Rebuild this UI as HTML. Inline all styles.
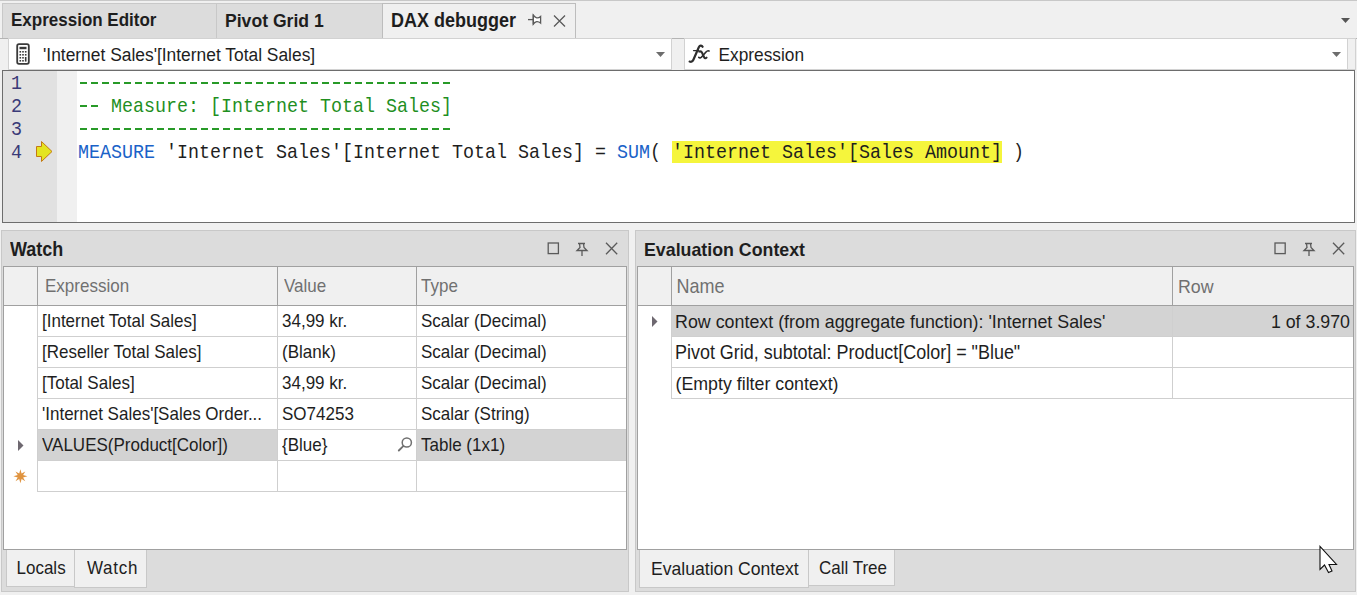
<!DOCTYPE html>
<html><head><meta charset="utf-8">
<style>
*{box-sizing:border-box;margin:0;padding:0}
html,body{width:1357px;height:595px;overflow:hidden;background:#f0f0f0;font-family:"Liberation Sans",sans-serif;font-size:17px;color:#1e1e1e}
.a{position:absolute}
.t{position:absolute;white-space:nowrap;line-height:20px;transform:scaleY(1.08);transform-origin:0 16px}
.b{font-weight:bold}
.m{position:absolute;font-family:"Liberation Mono",monospace;font-size:18.333px;line-height:23px;white-space:pre;left:78px;color:#1e1e1e;transform:scaleY(1.07);transform-origin:0 16px}
.dash{position:absolute;left:78px;width:374px;height:2px;background:repeating-linear-gradient(90deg,transparent 0 2px,#289a28 2px 9px,transparent 9px 11px)}
.g{color:#1f8f1f}
.k{color:#1a62c8}
.hl{background:#f5f53c}
.hd{color:#707070}
svg{position:absolute;overflow:visible}
</style></head><body>
<!-- top strip -->
<div class="a" style="left:0;top:0;width:1357px;height:1px;background:#c8c8c8"></div>
<div class="a" style="left:2px;top:3px;width:215px;height:36px;background:#dcdcdc;border:1px solid #c8c8c8;border-bottom:none"></div>
<div class="a" style="left:216px;top:3px;width:167px;height:36px;background:#dcdcdc;border:1px solid #c8c8c8;border-bottom:none"></div>
<div class="a" style="left:382px;top:3px;width:194px;height:36px;background:#f0f0f0;border:1px solid #bdbdbd;border-bottom:none"></div>
<div class="a" style="left:0;top:38px;width:1357px;height:1px;background:#b4b4b4"></div>
<div class="t b" style="left:11px;top:11px">Expression Editor</div>
<div class="t b" style="left:225px;top:11px;font-size:17.6px">Pivot Grid 1</div>
<div class="t b" style="left:391px;top:11px;font-size:18px">DAX debugger</div>
<!-- tab pin (horizontal) -->
<svg style="left:0;top:0" width="1" height="1"><g fill="none" stroke="#5a5a5a" stroke-width="1.3">
<path d="M533.3 15.2Q536.5 19.8 540.6 16.4V23.1Q536.5 19.6 533.3 24Z" fill="#fff"/><path d="M528 19.6H533.3"/><path d="M533.3 14.5V24.5"/>
<path d="M554 15.5L565 26.5M565 15.5L554 26.5"/></g></svg>
<!-- tab strip dropdown arrow -->
<svg style="left:1341px;top:18px" width="9" height="5"><path d="M0 0H9L4.5 5Z" fill="#555"/></svg>

<!-- combos -->
<div class="a" style="left:8px;top:38px;width:664px;height:32px;background:#fff;border:1px solid #d2d2d2"></div>
<div class="a" style="left:684px;top:38px;width:664px;height:32px;background:#fff;border:1px solid #d2d2d2"></div>
<div class="a" style="left:1347px;top:38px;width:9px;height:32px;background:#f0f0f0;border:1px solid #d2d2d2"></div>
<div class="t" style="left:43px;top:45px;font-size:17.4px">'Internet Sales'[Internet Total Sales]</div>
<div class="t" style="left:718.5px;top:45px;font-size:17.3px">Expression</div>
<svg style="left:656px;top:52px" width="9" height="5"><path d="M0 0H9L4.5 5Z" fill="#6d6d6d"/></svg>
<svg style="left:1332px;top:52px" width="9" height="5"><path d="M0 0H9L4.5 5Z" fill="#6d6d6d"/></svg>
<!-- calculator -->
<svg style="left:0;top:0" width="1" height="1">
<rect x="17.2" y="44.2" width="11.6" height="19.6" rx="1.8" fill="#fff" stroke="#3a3a3a" stroke-width="1.8"/>
<rect x="19.5" y="46.8" width="7" height="2.4" fill="#3a3a3a"/>
<g fill="#3a3a3a">
<rect x="19.5" y="51" width="1.6" height="1.6"/><rect x="22.2" y="51" width="1.6" height="1.6"/><rect x="24.9" y="51" width="1.6" height="1.6"/>
<rect x="19.5" y="54" width="1.6" height="1.6"/><rect x="22.2" y="54" width="1.6" height="1.6"/><rect x="24.9" y="54" width="1.6" height="1.6"/>
<rect x="19.5" y="57" width="1.6" height="1.6"/><rect x="22.2" y="57" width="1.6" height="1.6"/><rect x="24.9" y="57" width="1.6" height="4.6"/>
<rect x="19.5" y="60" width="1.6" height="1.6"/><rect x="22.2" y="60" width="1.6" height="1.6"/>
</g></svg>
<!-- fx -->
<svg style="left:0;top:0" width="1" height="1"><g fill="none" stroke="#2e2e2e" stroke-linecap="round">
<path d="M702.6 46.8C701.8 45.2 699.8 45.3 698.8 47.2L693.4 59.8C692.6 61.6 691 62.2 689.6 61.6" stroke-width="2.2"/>
<path d="M693.6 50.6H698.8" stroke-width="1.4"/>
<path d="M699.2 51.6C700.6 51 701.6 51.6 702.2 53L704 57C704.6 58.3 705.6 58.6 706.6 57.6" stroke-width="2"/>
<path d="M709 51C708 50.4 707 50.9 706 52L701.6 57C700.6 58.1 699.6 58.2 698.8 57.4" stroke-width="1.7"/>
</g></svg>

<!-- editor -->
<div class="a" style="left:2px;top:70px;width:1353px;height:153px;background:#fff;border:1px solid #6d6d6d"></div>
<div class="a" style="left:3px;top:71px;width:54px;height:151px;background:#e1e1e1"></div>
<div class="a" style="left:57px;top:71px;width:20px;height:151px;background:#f0f0f0"></div>
<div class="m" style="left:11px;top:73px;color:#3a3a78">1</div>
<div class="m" style="left:11px;top:96px;color:#3a3a78">2</div>
<div class="m" style="left:11px;top:119px;color:#3a3a78">3</div>
<div class="m" style="left:11px;top:142px;color:#3a3a78">4</div>
<svg style="left:0;top:0" width="1" height="1"><path d="M36.5 146.5H41.5V141.5L52 151.5L41.5 161.5V156.5H36.5Z" fill="#e4e420" stroke="#c47a12" stroke-width="1"/></svg>
<div class="dash" style="top:82px"></div>
<div class="dash" style="top:105px;width:22px"></div><div class="m g" style="top:96px">   Measure: [Internet Total Sales]</div>
<div class="dash" style="top:128px"></div>
<div class="a hl" style="left:672px;top:141px;width:330px;height:22px"></div>
<div class="m" style="top:142px"><span class="k">MEASURE</span> 'Internet Sales'[Internet Total Sales] = <span class="k">SUM</span>( 'Internet Sales'[Sales Amount] )</div>

<!-- bottom panels frames -->
<div class="a" style="left:1px;top:230px;width:628px;height:362px;background:#dcdcdc;border:1px solid #c8c8c8"></div>
<div class="a" style="left:635px;top:230px;width:721px;height:362px;background:#dcdcdc;border:1px solid #c8c8c8"></div>
<div class="t b" style="left:10px;top:240px;font-size:18px">Watch</div>
<div class="t b" style="left:644px;top:240px;font-size:17.8px">Evaluation Context</div>

<div class="a" style="left:3px;top:266px;width:624px;height:284px;background:#fff;border:1px solid #a0a0a0"></div>
<div class="a" style="left:637px;top:266px;width:717px;height:284px;background:#fff;border:1px solid #a0a0a0"></div>

<!-- watch grid -->
<div class="a" style="left:4px;top:267px;width:622px;height:38px;background:#f0f0f0"></div>
<div class="a" style="left:3px;top:305px;width:624px;height:1px;background:#a0a0a0"></div>
<div class="a" style="left:37px;top:267px;width:1px;height:38px;background:#a0a0a0"></div>
<div class="a" style="left:277px;top:267px;width:1px;height:38px;background:#a0a0a0"></div>
<div class="a" style="left:416px;top:267px;width:1px;height:38px;background:#a0a0a0"></div>
<div class="a" style="left:38px;top:430px;width:239px;height:30px;background:#d3d3d3"></div>
<div class="a" style="left:417px;top:430px;width:209px;height:30px;background:#d3d3d3"></div>
<div class="a" style="left:37px;top:336px;width:589px;height:1px;background:#cfcfcf"></div>
<div class="a" style="left:37px;top:367px;width:589px;height:1px;background:#cfcfcf"></div>
<div class="a" style="left:37px;top:398px;width:589px;height:1px;background:#cfcfcf"></div>
<div class="a" style="left:37px;top:429px;width:589px;height:1px;background:#cfcfcf"></div>
<div class="a" style="left:37px;top:460px;width:589px;height:1px;background:#cfcfcf"></div>
<div class="a" style="left:37px;top:491px;width:589px;height:1px;background:#cfcfcf"></div>
<div class="a" style="left:37px;top:306px;width:1px;height:186px;background:#cfcfcf"></div>
<div class="a" style="left:277px;top:306px;width:1px;height:186px;background:#cfcfcf"></div>
<div class="a" style="left:416px;top:306px;width:1px;height:186px;background:#cfcfcf"></div>
<div class="t hd" style="left:45px;top:277px">Expression</div>
<div class="t hd" style="left:284px;top:277px">Value</div>
<div class="t hd" style="left:421px;top:277px">Type</div>
<div class="t" style="left:42px;top:312px">[Internet Total Sales]</div>
<div class="t" style="left:282px;top:312px">34,99 kr.</div>
<div class="t" style="left:421px;top:312px">Scalar (Decimal)</div>
<div class="t" style="left:42px;top:343px">[Reseller Total Sales]</div>
<div class="t" style="left:282px;top:343px">(Blank)</div>
<div class="t" style="left:421px;top:343px">Scalar (Decimal)</div>
<div class="t" style="left:42px;top:374px">[Total Sales]</div>
<div class="t" style="left:282px;top:374px">34,99 kr.</div>
<div class="t" style="left:421px;top:374px">Scalar (Decimal)</div>
<div class="t" style="left:42px;top:405px">'Internet Sales'[Sales Order...</div>
<div class="t" style="left:282px;top:405px">SO74253</div>
<div class="t" style="left:421px;top:405px">Scalar (String)</div>
<div class="t" style="left:42px;top:436px">VALUES(Product[Color])</div>
<div class="t" style="left:282px;top:436px">{Blue}</div>
<div class="t" style="left:421px;top:436px">Table (1x1)</div>
<!-- eval grid -->
<div class="a" style="left:638px;top:267px;width:715px;height:38px;background:#f0f0f0"></div>
<div class="a" style="left:637px;top:305px;width:717px;height:1px;background:#a0a0a0"></div>
<div class="a" style="left:671px;top:267px;width:1px;height:38px;background:#a0a0a0"></div>
<div class="a" style="left:1172px;top:267px;width:1px;height:38px;background:#a0a0a0"></div>
<div class="a" style="left:672px;top:306px;width:681px;height:30px;background:#d3d3d3"></div>
<div class="a" style="left:671px;top:336px;width:682px;height:1px;background:#cfcfcf"></div>
<div class="a" style="left:671px;top:367px;width:682px;height:1px;background:#cfcfcf"></div>
<div class="a" style="left:671px;top:398px;width:682px;height:1px;background:#cfcfcf"></div>
<div class="a" style="left:671px;top:306px;width:1px;height:93px;background:#cfcfcf"></div>
<div class="a" style="left:1172px;top:306px;width:1px;height:93px;background:#cfcfcf"></div>
<div class="t hd" style="left:676.5px;top:277px;font-size:18px">Name</div>
<div class="t hd" style="left:1178px;top:277px;font-size:17.8px">Row</div>
<div class="t" style="left:675px;top:312px;font-size:17.85px">Row context (from aggregate function): 'Internet Sales'</div>
<div class="t" style="left:675px;top:343px;font-size:17.95px">Pivot Grid, subtotal: Product[Color] = "Blue"</div>
<div class="t" style="left:675.5px;top:374px;font-size:17.8px">(Empty filter context)</div>
<div class="t" style="right:7px;top:312px;font-size:17.8px">1 of 3.970</div>
<!-- grid icons -->
<svg style="left:0;top:0" width="1" height="1">
<path d="M18 440L23.5 445.5L18 451Z" fill="#6e6870"/>
<path d="M652 316L657.5 321.5L652 327Z" fill="#6e6870"/>
<circle cx="406.8" cy="442.5" r="4.6" fill="none" stroke="#707070" stroke-width="1.5"/>
<path d="M403.5 445.8L398.8 450.5" stroke="#707070" stroke-width="1.8" stroke-linecap="round"/>
<path fill="#e09440" d="M20.4 469.3L21.6 473.6L25.3 471.4L23.1 475.1L27.4 476.3L23.1 477.5L25.3 481.2L21.6 479L20.4 483.3L19.2 479L15.5 481.2L17.7 477.5L13.4 476.3L17.7 475.1L15.5 471.4L19.2 473.6Z"/>
</svg>
<!-- panel header icons -->
<svg style="left:0;top:0" width="1" height="1"><g fill="none" stroke="#5a5a5a" stroke-width="1.3">
<rect x="548.2" y="243" width="10.2" height="10.6"/>
<path d="M578 243.5H585M579.5 243.5L580 247.5L577 250.5H587L584 247.5L583.5 243.5M582 250.5V256"/>
<path d="M606 242.8L617.2 254.3M617.2 242.8L606 254.3"/>
<rect x="1275" y="243" width="10.2" height="10.6"/>
<path d="M1305 243.5H1312M1306.5 243.5L1307 247.5L1304 250.5H1314L1311 247.5L1310.5 243.5M1309 250.5V256"/>
<path d="M1333 242.8L1344.2 254.3M1344.2 242.8L1333 254.3"/>
</g></svg>
<!-- bottom tabs -->
<div class="a" style="left:6px;top:550px;width:69px;height:37px;background:#f0f0f0;border:1px solid #c8c8c8;border-top:none"></div>
<div class="a" style="left:74px;top:550px;width:73px;height:38px;background:#f0f0f0;border:1px solid #c8c8c8;border-top:none"></div>
<div class="t" style="left:16.5px;top:559px">Locals</div>
<div class="t" style="left:87px;top:559px;letter-spacing:0.7px">Watch</div>
<div class="a" style="left:639px;top:550px;width:170px;height:38px;background:#f0f0f0;border:1px solid #c8c8c8;border-top:none"></div>
<div class="a" style="left:808px;top:550px;width:87px;height:36px;background:#f0f0f0;border:1px solid #c8c8c8;border-top:none"></div>
<div class="t" style="left:651px;top:559px;font-size:17.6px">Evaluation Context</div>
<div class="t" style="left:819px;top:559px">Call Tree</div>
<!-- mouse cursor -->
<svg style="left:0;top:0" width="1" height="1"><path d="M1320 546.5V569.5L1324.5 565L1328.5 572.5L1332 571L1329 564.5H1336.5Z" fill="#fff" stroke="#111" stroke-width="1.1" stroke-linejoin="miter"/></svg>

</body></html>
